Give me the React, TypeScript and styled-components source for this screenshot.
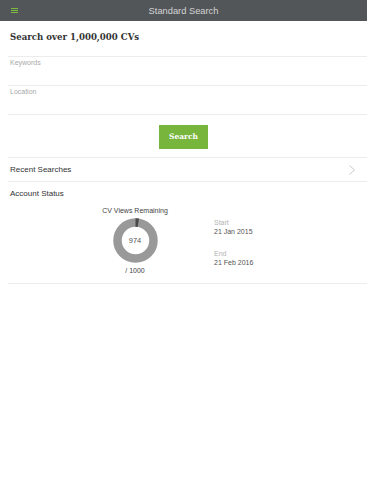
import React from "react";
import styled, { createGlobalStyle } from "styled-components";

const Global = createGlobalStyle`
  body {
    margin: 0;
    background: #fff;
    font-family: "Liberation Sans", Arial, sans-serif;
  }
`;

const Header = styled.header`
  height: 21px;
  background: #535659;
  display: flex;
  align-items: center;
  justify-content: center;
  position: relative;
  color: #d4d5d6;
  font-size: 9.3px;
`;

const Burger = styled.div`
  position: absolute;
  left: 11px;
  top: 8px;
  width: 7px;
  display: flex;
  flex-direction: column;
  gap: 1px;
  span {
    height: 1px;
    background: #7cbd3f;
  }
`;

const Content = styled.main`
  padding-left: 8px;
`;

const Title = styled.h1`
  margin: 0;
  padding: 11px 0 0 2px;
  height: 24px;
  font-family: "DejaVu Serif", Georgia, serif;
  font-weight: bold;
  font-size: 8.6px;
  color: #333;
  border-bottom: 1px solid #ececec;
`;

const Field = styled.div`
  height: 26px;
  padding: 2px 0 0 2px;
  font-size: 7px;
  color: #a9a9a9;
  border-bottom: 1px solid #ececec;
`;

const ButtonRow = styled.div`
  height: 42px;
  display: flex;
  align-items: center;
  justify-content: center;
  padding-right: 8px;
  border-bottom: 1px solid #ececec;
`;

const Button = styled.button`
  width: 49px;
  height: 24px;
  margin-top: 1px;
  border: 0;
  background: #77b53c;
  color: #fff;
  font-family: "DejaVu Serif", Georgia, serif;
  font-weight: bold;
  font-size: 7.5px;
  padding: 0;
`;

const Row = styled.div<{ $border?: boolean }>`
  height: 23px;
  display: flex;
  align-items: center;
  justify-content: space-between;
  padding: 0 12px 0 2px;
  font-size: 8px;
  color: #333;
  border-bottom: ${(p) => (p.$border ? "1px solid #ececec" : "none")};
`;

const Status = styled.section`
  display: flex;
  padding: 2px 0 9px 0;
  border-bottom: 1px solid #ececec;
`;

const Gauge = styled.div`
  width: 254px;
  display: flex;
  flex-direction: column;
  align-items: center;
  font-size: 7px;
  color: #444;
  gap: 4px;
`;

const Ring = styled.div`
  position: relative;
  width: 45px;
  height: 45px;
  display: flex;
  align-items: center;
  justify-content: center;
  svg {
    position: absolute;
    inset: 0;
  }
`;

const RingValue = styled.span`
  font-size: 7.5px;
  color: #555;
`;

const Dates = styled.div`
  display: flex;
  flex-direction: column;
  padding-top: 12px;
  gap: 15px;
  margin-left: -48px;
`;

const DateItem = styled.div`
  display: flex;
  flex-direction: column;
  gap: 2px;
`;

const DateLabel = styled.span`
  font-size: 7px;
  color: #b3b3b3;
`;

const DateValue = styled.span`
  font-size: 7px;
  color: #555;
`;

export default function App() {
  const total = 1000;
  const left = 974;
  const r = 18;
  const c = 2 * Math.PI * r;
  const used = ((total - left) / total) * c;
  return (
    <>
      <Global />
      <Header>
        <Burger>
          <span />
          <span />
          <span />
        </Burger>
        Standard Search
      </Header>
      <Content>
        <Title>Search over 1,000,000 CVs</Title>
        <Field>Keywords</Field>
        <Field>Location</Field>
        <ButtonRow>
          <Button>Search</Button>
        </ButtonRow>
        <Row $border>
          Recent Searches
          <svg width="6" height="10" viewBox="0 0 6 10">
            <path d="M0.5 0.5 L5.5 5 L0.5 9.5" fill="none" stroke="#bbb" strokeWidth="0.8" />
          </svg>
        </Row>
        <Row>Account Status</Row>
        <Status>
          <Gauge>
            <span>CV Views Remaining</span>
            <Ring>
              <svg width="45" height="45" viewBox="0 0 45 45">
                <circle cx="22.5" cy="22.5" r={r} fill="none" stroke="#999" strokeWidth="8.5" />
                <circle
                  cx="22.5"
                  cy="22.5"
                  r={r}
                  fill="none"
                  stroke="#4a4a4a"
                  strokeWidth="8.5"
                  strokeDasharray={`${used} ${c}`}
                  transform="rotate(-90 22.5 22.5)"
                />
              </svg>
              <RingValue>{left}</RingValue>
            </Ring>
            <span>/ {total}</span>
          </Gauge>
          <Dates>
            <DateItem>
              <DateLabel>Start</DateLabel>
              <DateValue>21 Jan 2015</DateValue>
            </DateItem>
            <DateItem>
              <DateLabel>End</DateLabel>
              <DateValue>21 Feb 2016</DateValue>
            </DateItem>
          </Dates>
        </Status>
      </Content>
    </>
  );
}
